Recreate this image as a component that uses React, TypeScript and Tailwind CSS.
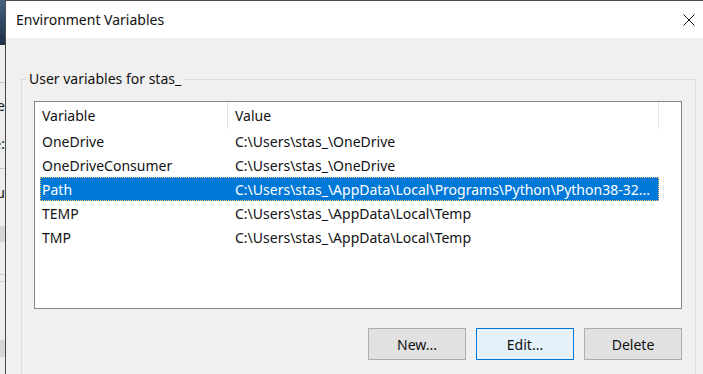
import React from "react";

const rows = [
  { name: "OneDrive", value: "C:\\Users\\stas_\\OneDrive" },
  { name: "OneDriveConsumer", value: "C:\\Users\\stas_\\OneDrive" },
  { name: "Path", value: "C:\\Users\\stas_\\AppData\\Local\\Programs\\Python\\Python38-32...", selected: true },
  { name: "TEMP", value: "C:\\Users\\stas_\\AppData\\Local\\Temp" },
  { name: "TMP", value: "C:\\Users\\stas_\\AppData\\Local\\Temp" },
];

function Clip({ text }: { text: string }) {
  return (
    <div className="w-[5px] overflow-hidden flex justify-end">
      <span className="whitespace-nowrap text-[14px] leading-[18px] text-[#1a1a1a]">{text}</span>
    </div>
  );
}

export default function App() {
  return (
    <div className="w-[703px] h-[374px] overflow-hidden flex bg-[#f0f0f0] font-['Noto_Sans',sans-serif] text-black">
      {/* background window strip */}
      <div className="w-[5px] shrink-0 flex flex-col bg-[#ececec]">
        <div className="h-[45px] bg-gradient-to-b from-[#46627f] to-[#1c2f45]" />
        <div className="h-[37px]" />
        <div className="h-[86px] border-t border-[#c9c9c9] flex flex-col pt-[14px] gap-[20px]">
          <Clip text="Name" />
          <Clip text="Value:" />
        </div>
        <div className="h-[58px] border-t border-[#c9c9c9] pt-[15px]">
          <Clip text="Menu" />
        </div>
        <div className="h-[16px] bg-[#d6d6d6]" />
        <div className="h-[32px]" />
        <div className="h-[8px] border-t border-b border-[#cfcfcf]" />
        <div className="h-[58px]" />
        <div className="h-[17px] bg-[#d6d6d6]" />
        <div className="flex-1" />
      </div>

      {/* dialog */}
      <div className="flex-1 flex flex-col border-l border-t border-[#4a4a4a] min-w-0">
        <div className="h-[37px] shrink-0 bg-white flex items-center justify-between pl-[10px] pr-[8px]">
          <span className="text-[14px] text-[#111]">Environment Variables</span>
          <svg width="12" height="12" viewBox="0 0 12 12" className="shrink-0">
            <path d="M0.5 0.5 L11.5 11.5 M11.5 0.5 L0.5 11.5" stroke="#111" strokeWidth="1" />
          </svg>
        </div>

        <div className="flex-1 bg-[#f0f0f0] pt-[33px] pl-[15px] pr-[7px]">
          <fieldset className="border border-[#dcdcdc] p-0 m-0">
            <legend className="ml-[4px] px-[3px] text-[14px] leading-[16px] text-[#111]">User variables for stas_</legend>
            <div className="pt-[14px] pl-[12px] pr-[13px] pb-[30px]">
              <div className="h-[208px] border border-[#828790] bg-white pl-[5px]">
                <div className="flex h-[27px] text-[14px] text-[#111]">
                  <div className="w-[188px] border-r border-[#e5e5e5] pl-[2px] flex items-center">Variable</div>
                  <div className="w-[431px] border-r border-[#e5e5e5] pl-[7px] flex items-center">Value</div>
                </div>
                {rows.map((r) => (
                  <div
                    key={r.name}
                    className={
                      r.selected
                        ? "flex w-[619px] h-[24px] items-center text-[14px] bg-[#0078d7] text-white outline outline-1 outline-dotted outline-[#f2c96a] -outline-offset-1"
                        : "flex w-[619px] h-[24px] items-center text-[14px] text-[#111]"
                    }
                  >
                    <div className="w-[188px] pl-[2px] whitespace-nowrap">{r.name}</div>
                    <div className="flex-1 pl-[7px] whitespace-nowrap overflow-hidden">{r.value}</div>
                  </div>
                ))}
              </div>
              <div className="flex justify-end gap-[10px] mt-[19px]">
                <button className="w-[98px] h-[32px] bg-[#e1e1e1] border border-[#adadad] text-[14px] text-[#111]">New...</button>
                <button className="w-[98px] h-[32px] bg-[#e5f1fb] border border-[#0078d7] text-[14px] text-[#111]">Edit...</button>
                <button className="w-[98px] h-[32px] bg-[#e1e1e1] border border-[#adadad] text-[14px] text-[#111]">Delete</button>
              </div>
            </div>
          </fieldset>
        </div>
      </div>
    </div>
  );
}
